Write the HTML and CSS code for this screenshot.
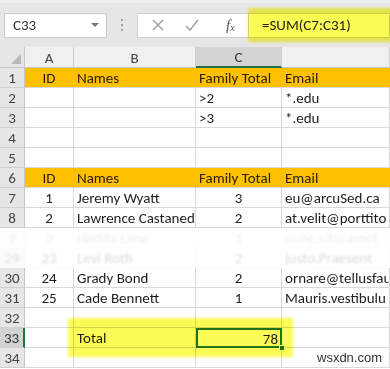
FILE: index.html
```html
<!DOCTYPE html>
<html>
<head>
<meta charset="utf-8">
<link rel="stylesheet" href="styles.css">
</head>
<body>
<div class="app">
  <div class="topbar">
    <div class="namebox"><span>C33</span><span class="caret"></span></div>
    <div class="dots"><i></i><i></i><i></i></div>
    <div class="fbtns">
      <svg class="ico" width="14" height="14" viewBox="0 0 14 14"><path d="M2 2L12 12M12 2L2 12" stroke="#a6a6a6" stroke-width="1.6" fill="none"/></svg>
      <svg class="ico" width="16" height="14" viewBox="0 0 16 14"><path d="M2 8L6 12L14 2" stroke="#a6a6a6" stroke-width="1.6" fill="none"/></svg>
      <span class="fx"><i>f</i><sub>x</sub></span>
    </div>
    <div class="finput">=SUM(C7:C31)</div>
    <div class="hl hl-formula"></div>
  </div>

  <div class="sheet">
    <div class="c corner"><span class="tri"></span></div>
    <div class="c ch">A</div>
    <div class="c ch">B</div>
    <div class="c ch sel">C</div>
    <div class="c ch"></div>

    <div class="c rh">1</div>
    <div class="c o ctr">ID</div>
    <div class="c o">Names</div>
    <div class="c o">Family Total</div>
    <div class="c o">Email</div>

    <div class="c rh">2</div>
    <div class="c"></div>
    <div class="c"></div>
    <div class="c">&gt;2</div>
    <div class="c">*.edu</div>

    <div class="c rh">3</div>
    <div class="c"></div>
    <div class="c"></div>
    <div class="c">&gt;3</div>
    <div class="c">*.edu</div>

    <div class="c rh">4</div>
    <div class="c"></div>
    <div class="c"></div>
    <div class="c"></div>
    <div class="c"></div>

    <div class="c rh">5</div>
    <div class="c"></div>
    <div class="c"></div>
    <div class="c"></div>
    <div class="c"></div>

    <div class="c rh">6</div>
    <div class="c o ctr">ID</div>
    <div class="c o">Names</div>
    <div class="c o">Family Total</div>
    <div class="c o">Email</div>

    <div class="c rh">7</div>
    <div class="c ctr">1</div>
    <div class="c">Jeremy Wyatt</div>
    <div class="c ctr">3</div>
    <div class="c">eu@arcuSed.ca</div>

    <div class="c rh">8</div>
    <div class="c ctr">2</div>
    <div class="c">Lawrence Castaned</div>
    <div class="c ctr">2</div>
    <div class="c">at.velit@porttito</div>

    <div class="c rh g1">9</div>
    <div class="c ctr g1">3</div>
    <div class="c g1">Hedda Lane</div>
    <div class="c ctr g1">1</div>
    <div class="c g1">nunc.sit@amet</div>

    <div class="c rh g2">29</div>
    <div class="c ctr g2">23</div>
    <div class="c g2">Levi Roth</div>
    <div class="c ctr g2">2</div>
    <div class="c g2">justo.Praesent</div>

    <div class="c rh">30</div>
    <div class="c ctr">24</div>
    <div class="c">Grady Bond</div>
    <div class="c ctr">2</div>
    <div class="c">ornare@tellusfau</div>

    <div class="c rh">31</div>
    <div class="c ctr">25</div>
    <div class="c">Cade Bennett</div>
    <div class="c ctr">1</div>
    <div class="c">Mauris.vestibulu</div>

    <div class="c rh">32</div>
    <div class="c"></div>
    <div class="c"></div>
    <div class="c"></div>
    <div class="c"></div>

    <div class="c rh rsel">33</div>
    <div class="c"></div>
    <div class="c">Total</div>
    <div class="c num active">78<span class="handle"></span></div>
    <div class="c"></div>

    <div class="c rh">34</div>
    <div class="c"></div>
    <div class="c"></div>
    <div class="c"></div>
    <div class="c"></div>

    <div class="hl hl-total"></div>
  </div>
  <div class="wm">wsxdn.com</div>
</div>
</body>
</html>
```

FILE: styles.css
```css
* { box-sizing: border-box; }
html, body { margin: 0; padding: 0; background: #ffffff; }
body {
  font-family: Carlito, Lato, "Open Sans", sans-serif;
  font-size: 15px;
  color: #1e1e1e;
  width: 390px;
  height: 369px;
  overflow: hidden;
}
.app { position: relative; width: 390px; height: 369px; overflow: hidden; }

.topbar {
  position: relative;
  height: 47px;
  background: #e6e6e6;
  border-top: 3px solid #ededed;
  display: flex;
  align-items: center;
  padding-left: 4px;
}
.namebox {
  width: 103px;
  height: 25px;
  background: #ffffff;
  border: 1px solid #c8c8c8;
  display: flex;
  align-items: center;
  justify-content: space-between;
  padding: 0 7px 0 8px;
  color: #333;
  font-size: 15px;
}
.caret {
  width: 0; height: 0;
  border-left: 4px solid transparent;
  border-right: 4px solid transparent;
  border-top: 4px solid #777;
}
.dots {
  width: 30px;
  display: flex;
  flex-direction: column;
  align-items: center;
  gap: 3px;
}
.dots i { width: 2px; height: 2px; background: #a0a0a0; display: block; }
.fbtns {
  width: 111px;
  height: 25px;
  background: #ffffff;
  border: 1px solid #d0d0d0;
  border-right: none;
  display: flex;
  align-items: center;
  padding-left: 13px;
  gap: 19px;
}
.ico { display: block; }
.fx { font-family: "Liberation Serif", serif; color: #555; font-size: 15px; margin-left: 7px; }
.fx sub { font-size: 10px; font-style: italic; vertical-align: -1px; }
.finput {
  flex: 1;
  height: 25px;
  background: #ffffff;
  border: 1px solid #d0d0d0;
  display: flex;
  align-items: center;
  padding-left: 13px;
  color: #222;
  font-size: 15px;
}

.hl {
  position: absolute;
  background: #fbfb55;
  mix-blend-mode: multiply;
  filter: blur(1.5px);
  pointer-events: none;
}
.hl-formula { left: 248px; top: 5px; width: 150px; height: 34px; }
.hl-total { left: 68px; top: 271px; width: 225px; height: 39px; }

.sheet {
  position: relative;
  display: grid;
  grid-template-columns: 25px 49px 122px 86px 108px;
  grid-template-rows: 21px;
  grid-auto-rows: 20px;
}
.c {
  border-right: 1px solid #d9d9d9;
  border-bottom: 1px solid #d9d9d9;
  padding: 0 3px;
  display: flex;
  align-items: center;
  white-space: nowrap;
  overflow: hidden;
  line-height: 1;
  padding-top: 2px;
}
.ctr { justify-content: center; }
.num { justify-content: flex-end; }
.corner { background: #e6e6e6; border-right-color: #c6c6c6; border-bottom-color: #c6c6c6; position: relative; }
.tri {
  position: absolute; right: 3px; bottom: 3px;
  width: 0; height: 0;
  border-left: 10px solid transparent;
  border-bottom: 10px solid #b8b8b8;
}
.ch {
  background: #f0f0f0;
  justify-content: center;
  color: #444;
  border-bottom-color: #c6c6c6;
  border-right-color: #cfcfcf;
}
.ch.sel { background: #d4d4d4; border-bottom: 2px solid #217346; color: #333; }
.rh {
  background: #e6e6e6;
  justify-content: center;
  color: #444;
  border-right-color: #c6c6c6;
  border-bottom-color: #d0d0d0;
  padding: 2px 0 0 0;
}
.rh.rsel { background: #d2d2d2; border-right: 2px solid #217346; color: #333; }
.o { background: #ffc000; border-right-color: #ffc000; color: #2a2000; }
.g1 { opacity: 0.07; filter: blur(1px); }
.g2 { opacity: 0.17; filter: blur(1px); }
.active { position: relative; overflow: visible; box-shadow: inset 0 0 0 2px #217346; border-right: none; border-bottom: none; padding-right: 4px; }
.handle {
  position: absolute; right: -3px; bottom: -3px;
  width: 6px; height: 6px;
  background: #217346;
  border: 1px solid #ffffff;
}
.wm {
  position: absolute;
  left: 317px;
  top: 350px;
  font-family: "Liberation Sans", sans-serif;
  font-size: 13px;
  color: #333;
}
```
